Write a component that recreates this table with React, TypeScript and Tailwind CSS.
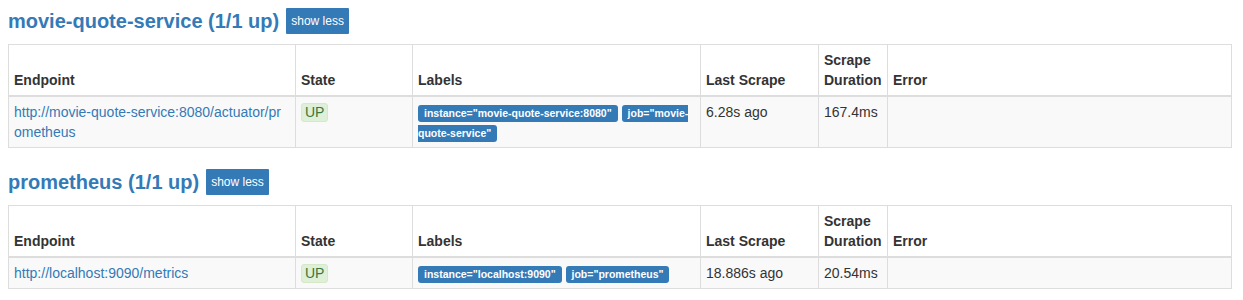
const sans = "font-['Liberation_Sans','Helvetica_Neue',Arial,sans-serif]"

type Target = {
  endpoint: string
  labels: string[]
  lastScrape: string
  duration: string
}

type Pool = {
  name: string
  targets: Target[]
}

const pools: Pool[] = [
  {
    name: "movie-quote-service",
    targets: [
      {
        endpoint: "http://movie-quote-service:8080/actuator/prometheus",
        labels: ['instance="movie-quote-service:8080"', 'job="movie-quote-service"'],
        lastScrape: "6.28s ago",
        duration: "167.4ms",
      },
    ],
  },
  {
    name: "prometheus",
    targets: [
      {
        endpoint: "http://localhost:9090/metrics",
        labels: ['instance="localhost:9090"', 'job="prometheus"'],
        lastScrape: "18.886s ago",
        duration: "20.54ms",
      },
    ],
  },
]

function PoolTable({ pool, first }: { pool: Pool; first: boolean }) {
  const th = "border border-[#ddd] border-b-2 px-[5px] py-[5px] text-left align-bottom font-bold"
  const td = "border border-[#ddd] px-[5px] py-[5px] align-top"
  return (
    <section className={first ? "mt-[8px]" : "mt-[21px]"}>
      {/* Pool header */}
      <div className="flex items-center h-[26px] pl-[8px]">
        <h2 className="text-[20px] font-bold leading-none text-[#337ab7]">
          {pool.name} ({pool.targets.length}/{pool.targets.length} up)
        </h2>
        <button
          type="button"
          className="ml-[7px] h-[26px] px-[5px] bg-[#337ab7] text-white text-[12px] leading-[18px] rounded-[1px]"
        >
          show less
        </button>
      </div>

      <table className="ml-[8px] mt-[10px] w-[1224px] table-fixed border-collapse text-[14px] leading-[20px] text-[#333]">
        <colgroup>
          <col className="w-[287px]" />
          <col className="w-[117px]" />
          <col className="w-[288px]" />
          <col className="w-[118px]" />
          <col className="w-[69px]" />
          <col />
        </colgroup>
        <thead>
          <tr className="bg-white">
            <th className={th}>Endpoint</th>
            <th className={th}>State</th>
            <th className={th}>Labels</th>
            <th className={th}>Last Scrape</th>
            <th className={th}>Scrape Duration</th>
            <th className={th}>Error</th>
          </tr>
        </thead>
        <tbody>
          {pool.targets.map((t) => (
            <tr key={t.endpoint} className="bg-[#f9f9f9]">
              <td className="border border-[#ddd] pl-[5px] pr-[10px] py-[5px] align-top">
                <a href="#" className="break-all text-[#337ab7]">
                  {t.endpoint}
                </a>
              </td>
              <td className={td}>
                <span className="inline-block rounded-[3px] border border-[#d6e9c6] bg-[#dff0d8] px-[3px] leading-[17px] text-[#3c763d]">
                  UP
                </span>
              </td>
              <td className={td}>
                {t.labels.map((l, i) => (
                  <span key={l}>
                    <span className="rounded-[3px] bg-[#337ab7] px-[6px] pt-[2px] pb-[3px] text-[10.5px] font-bold leading-[12px] text-white">
                      {l}
                    </span>
                    {i < t.labels.length - 1 ? " " : null}
                  </span>
                ))}
              </td>
              <td className={td}>{t.lastScrape}</td>
              <td className={td}>{t.duration}</td>
              <td className={td}></td>
            </tr>
          ))}
        </tbody>
      </table>
    </section>
  )
}

export default function App() {
  return (
    <div className={`${sans} bg-white w-[1243px] h-[300px] overflow-hidden`}>
      {pools.map((p, i) => (
        <PoolTable key={p.name} pool={p} first={i === 0} />
      ))}
    </div>
  )
}
